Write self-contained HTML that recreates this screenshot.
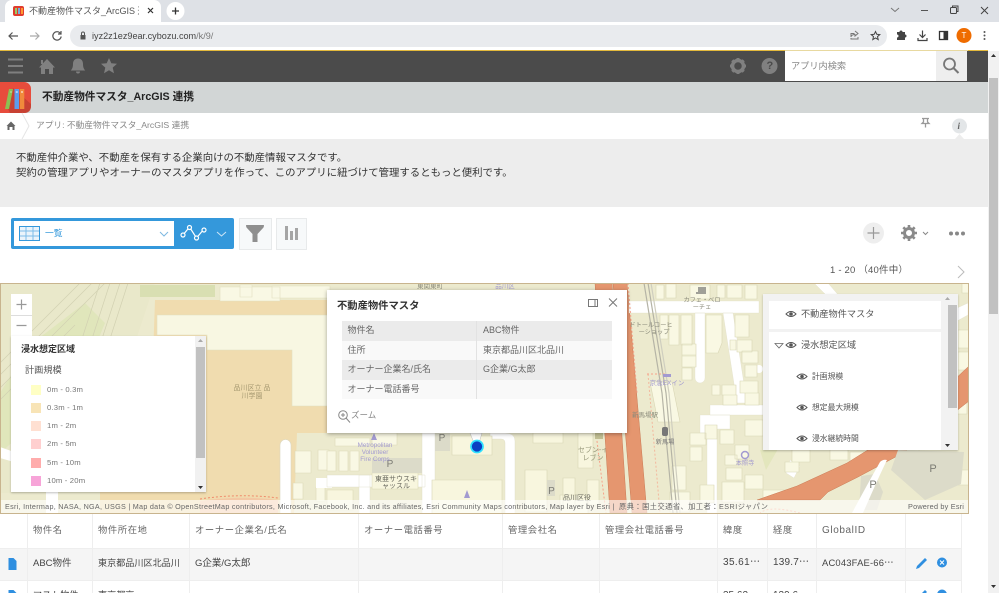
<!DOCTYPE html>
<html lang="ja"><head><meta charset="utf-8"><title>不動産物件マスタ_ArcGIS 連携</title>
<style>
html{margin:0;padding:0;background:#fff;width:999px;height:593px;overflow:hidden}
body{margin:0;padding:0;background:#fff;width:999px;height:593px;overflow:hidden;position:relative;font-family:"Liberation Sans","Noto Sans CJK JP",sans-serif;color:#333}
.a{position:absolute;white-space:nowrap}
.b{position:absolute}
svg{position:absolute;overflow:visible}
.th{position:absolute;top:514px;height:34px;line-height:33px;font-size:9.3px;color:#666;letter-spacing:.6px;white-space:nowrap}
.td{position:absolute;font-size:9.100px;color:#444;white-space:nowrap;top:548px;height:32px;line-height:31px}
.v{position:absolute;top:514px;width:1px;height:79px;background:#eeeeee}
.pt{position:absolute;font-size:9px;color:#666;white-space:nowrap;line-height:19px}
.lg{position:absolute;left:47px;font-size:7.700px;color:#777;white-space:nowrap;letter-spacing:.17px;line-height:12px}
.sw{position:absolute;left:31px;width:10px;height:10px}
</style></head><body>

<!-- chrome tab strip -->
<div class="b" style="left:0;top:0;width:999px;height:22px;background:#dee1e6"></div>
<div class="b" style="left:5px;top:0;width:156px;height:22px;background:#fff;border-radius:7px 7px 0 0"></div>
<div class="b" style="left:13px;top:6px;width:11px;height:10px;background:#e03c2e;border-radius:2px"></div>
<div class="b" style="left:15px;top:8px;width:2px;height:6px;background:#9c6"></div>
<div class="b" style="left:18px;top:8px;width:2px;height:6px;background:#7ad"></div>
<div class="b" style="left:21px;top:8px;width:2px;height:6px;background:#f93"></div>
<div class="a" style="left:29px;top:4px;width:110px;overflow:hidden;font-size:9px;line-height:14px;color:#555">不動産物件マスタ_ArcGIS 連携 - kintone</div>
<svg style="left:0;top:0" width="999" height="50" fill="none" stroke="#444">
<path d="M148 8l5 5M153 8l-5 5" stroke="#333" stroke-width="1.2"/>
<circle cx="175.500" cy="11" r="9" fill="#fff" stroke="none"/><path d="M175.500 7.500v7M172 11h7" stroke-width="1.3" stroke="#333"/>
<path d="M891 8l4 3.500 4-3.500" stroke="#777"/><path d="M921 10.500h7" stroke="#555"/>
<rect x="950.500" y="7.500" width="6" height="6" stroke="#444" rx="1"/><path d="M952.500 7v-1h5.500v5.500h-1" stroke="#444"/>
<path d="M981 7l7 7M988 7l-7 7" stroke="#444"/>
<!-- nav -->
<path d="M9 36h9M12.500 32.500L9 36l3.500 3.500" stroke="#555" stroke-width="1.2"/>
<path d="M30 36h9M35.500 32.500L39 36l-3.500 3.500" stroke="#aaa" stroke-width="1.2"/>
<path d="M60.500 33.500a4.200 4.200 0 1 0 .7 3M61 31v3h-3" stroke="#555" stroke-width="1.2"/>
<rect x="70" y="25" width="817" height="22" rx="11" fill="#e9ebee" stroke="none"/>
<rect x="80.500" y="35" width="5" height="4.500" fill="#555" stroke="none"/><path d="M81.500 35v-1.500a1.500 1.500 0 0 1 3 0V35" stroke="#555"/>
<path d="M851 37v-3.500h3.500M855 31l3 2.500-3 2.500v-1.500q-3 0-4 2M851 38v1h7v-2" stroke="#777"/>
<path d="M875.500 31.500l1.300 2.800 3 .3-2.300 2 .7 3-2.700-1.600-2.700 1.600.7-3-2.300-2 3-.3z" stroke="#444"/>
<path d="M897 33h2.500a1.500 1.500 0 0 1 3 0h2.500v2.500a1.500 1.500 0 0 1 0 3V41h-8v-2.500a1.500 1.500 0 0 0 0-3z" fill="#444" stroke="none" transform="translate(0,-1)"/>
<path d="M922.500 30.500v7M919.500 34.500l3 3 3-3M918 38v2.500h9V38" stroke="#444" stroke-width="1.200"/>
<rect x="939.500" y="31.500" width="8" height="8" stroke="#333" stroke-width="1.300"/><rect x="943.500" y="32" width="4" height="7" fill="#333" stroke="none"/>
<circle cx="964" cy="35.500" r="7.500" fill="#ef6c00" stroke="none"/>
<circle cx="984.500" cy="32" r="1" fill="#555" stroke="none"/><circle cx="984.500" cy="35.500" r="1" fill="#555" stroke="none"/><circle cx="984.500" cy="39" r="1" fill="#555" stroke="none"/>
</svg>
<div class="a" style="left:961.500px;top:30px;font-size:8px;line-height:11px;color:#fff">T</div>
<div class="a" style="left:92px;top:30px;font-size:9.100px;line-height:13px;color:#444">iyz2z1ez9ear.cybozu.com<span style="color:#777">/k/9/</span></div>

<!-- kintone header -->
<div class="b" style="left:0;top:50px;width:988px;height:1px;background:#e3b93c"></div>
<div class="b" style="left:0;top:51px;width:988px;height:31px;background:#4b4b4b"></div>
<div class="b" style="left:785px;top:50px;width:183px;height:1px;background:#e8d9a0"></div>
<div class="b" style="left:785px;top:51px;width:152px;height:30px;background:#fff"></div>
<div class="b" style="left:936px;top:51px;width:31px;height:30px;background:#eeeeee"></div>
<div class="a" style="left:791px;top:59px;font-size:9.200px;line-height:14px;color:#888">アプリ内検索</div>
<svg style="left:0;top:0" width="999" height="140" fill="none">
<path d="M8 59.500h15M8 66h15M8 72.500h15" stroke="#7f7f7f" stroke-width="2"/>
<path d="M39 67.500L47 59l8 8.500h-2v6.500h-4v-5h-4v5h-4v-6.500z" fill="#808080"/><rect x="41" y="60" width="2" height="4" fill="#808080"/>
<path d="M78 58.500c-3.500 0-5 2.500-5 5.500 0 3.500-1 5-2.200 6.500h14.400c-1.200-1.500-2.200-3-2.200-6.500 0-3-1.500-5.500-5-5.500z M76 71.500a2 2 0 0 0 4 0z" fill="#808080"/>
<path d="M109 58l2.300 5.200 5.700.6-4.300 3.800 1.300 5.600-5-3-5 3 1.300-5.600-4.300-3.800 5.700-.6z" fill="#808080"/>
<g transform="translate(738,66)"><circle r="5.500" stroke="#808080" stroke-width="3.500"/><g stroke="#808080" stroke-width="3"><path d="M0-8v2.500M0 8V5.500M-8 0h2.500M8 0H5.500M-5.700-5.700l1.800 1.800M5.700 5.700L3.900 3.900M-5.700 5.700l1.800-1.800M5.700-5.700L3.900-3.900"/></g></g>
<circle cx="769.500" cy="66" r="8" fill="#808080"/>
<circle cx="949.500" cy="64" r="5.500" stroke="#777" stroke-width="1.800"/><path d="M953.500 68l5 5" stroke="#777" stroke-width="2"/>
<path d="M0 139V113h988v26z" fill="#fff"/>
</svg>
<div class="a" style="left:766.500px;top:59px;font-size:11px;font-weight:700;line-height:14px;color:#4b4b4b">?</div>
<div class="b" style="left:0;top:82px;width:988px;height:31px;background:#d2d6d6"></div>
<div class="b" style="left:0;top:82px;width:31px;height:31px;background:#e74c3c;border-radius:0 7px 7px 0"></div>
<svg style="left:0;top:82px" width="31" height="31">
<path d="M13 6L31 22v2q0 7-7 7H10L6 23z" fill="#bd3d30" opacity=".75"/>
<path d="M9 7h4l-4 20H5z" fill="#8cc152"/><rect x="14.500" y="7" width="4.500" height="20" fill="#5d9cec"/><rect x="19.800" y="7" width="4.500" height="20" fill="#f08a3c"/>
<path d="M10.500 10h1M15.800 10h2M21 10h2" stroke="#fff"/>
</svg>
<div class="a" style="left:42px;top:90px;font-size:10.700px;font-weight:700;line-height:15px;color:#222">不動産物件マスタ_ArcGIS 連携</div>

<!-- breadcrumb -->
<svg style="left:0;top:113px" width="988" height="26" fill="none">
<path d="M22 0l7 13-7 13" stroke="#e5e5e5"/>
<path d="M6.500 13L11 8.500l4.500 4.500h-1v4h-2v-3h-3v3h-2v-4z" fill="#666"/>
<path d="M922 5.500h7M923.500 5.500v3.500l-1.500 1.500h7l-1.500-1.500v-3.500M925.500 10.500v4" stroke="#999" stroke-width="1.300"/>
<circle cx="959.500" cy="13" r="7.500" fill="#e3e6e8"/>
<path d="M955 26l4.500-5 4.500 5z" fill="#ededed"/>
</svg>
<div class="a" style="left:36px;top:118px;font-size:8.700px;line-height:14px;color:#888">アプリ: 不動産物件マスタ_ArcGIS 連携</div>
<div class="a" style="left:957.500px;top:120px;font-size:9px;font-style:italic;font-weight:700;font-family:'Liberation Serif',serif;line-height:12px;color:#666">i</div>

<!-- description -->
<div class="b" style="left:0;top:139px;width:988px;height:68px;background:#ededed"></div>
<div class="a" style="left:16px;top:151px;font-size:10.400px;line-height:15px;color:#333">不動産仲介業や、不動産を保有する企業向けの不動産情報マスタです。</div>
<div class="a" style="left:16px;top:166px;font-size:10.400px;line-height:15px;color:#333">契約の管理アプリやオーナーのマスタアプリを作って、このアプリに紐づけて管理するともっと便利です。</div>

<!-- toolbar -->
<div class="b" style="left:11px;top:218px;width:223px;height:31px;background:#3498db;border-radius:2px"></div>
<div class="b" style="left:14px;top:221px;width:160px;height:25px;background:#fff"></div>
<div class="a" style="left:45px;top:226px;font-size:8.800px;line-height:14px;color:#3498db">一覧</div>
<div class="b" style="left:239px;top:218px;width:31px;height:30px;background:#f7f9fa;border:1px solid #e8eaeb"></div>
<div class="b" style="left:276px;top:218px;width:29px;height:30px;background:#f7f9fa;border:1px solid #e8eaeb"></div>
<svg style="left:0;top:210px" width="320" height="45" fill="none">
<rect x="19.500" y="16.500" width="20" height="14" stroke="#3498db" fill="#eaf4fb"/>
<path d="M20 21h19M20 26h19M26 17v13M33 17v13" stroke="#7dbde8"/>
<path d="M160 22l4 4 4-4" stroke="#7db8e0"/>
<path d="M183 25l6.500-8 7 11 7.500-9" stroke="#fff" stroke-width="1.200"/>
<g fill="#3498db" stroke="#fff" stroke-width="1.200"><circle cx="183" cy="25" r="2"/><circle cx="189.500" cy="17.500" r="2"/><circle cx="196.500" cy="28" r="2"/><circle cx="204" cy="20" r="2"/></g>
<path d="M217 22l4.500 4 4.500-4" stroke="#cfe6f6"/>
<path d="M246.500 15h17q1 0 0 2.500l-6 6.500v8l-5 0v-8l-6-6.500q-1-2.500 0-2.500z" fill="#8f8f8f"/>
<rect x="285" y="16" width="3" height="14" fill="#a5a5a5"/><rect x="290" y="21" width="3" height="9" fill="#a5a5a5"/><rect x="295" y="18" width="3" height="12" fill="#a5a5a5"/>
</svg>
<svg style="left:800px;top:215px" width="188" height="65" fill="none">
<circle cx="73.500" cy="18" r="10.500" fill="#eeeeee"/><path d="M73.500 12v12M67.500 18h12" stroke="#999" stroke-width="1.200"/>
<g transform="translate(109,18)"><circle r="4.500" stroke="#8a8a8a" stroke-width="3"/><path d="M0-8V-5M0 8V5M-8 0h3M8 0H5M-5.700-5.700l2 2M5.700 5.700l-2-2M-5.700 5.700l2-2M5.700-5.700l-2 2" stroke="#8a8a8a" stroke-width="2.600"/></g>
<path d="M123 17l2.500 2.500L128 17" stroke="#888"/>
<circle cx="151" cy="18.500" r="2" fill="#888"/><circle cx="157" cy="18.500" r="2" fill="#888"/><circle cx="163" cy="18.500" r="2" fill="#888"/>
<path d="M158 51l6 6-6 6" stroke="#bbb"/>
</svg>
<div class="a" style="left:830px;top:264px;font-size:9.500px;line-height:14px;color:#555;letter-spacing:.2px">1 - 20 （40件中）</div>

<!-- map -->
<div class="b" style="left:0;top:283px;width:969px;height:231px;overflow:hidden;background:#ecead0">
<svg style="left:0;top:0;filter:blur(.35px)" width="969" height="231" viewBox="0 283 969 231">
<rect x="0" y="283" width="969" height="231" fill="#eceace"/>
<!-- terrain left -->
<path d="M0 283h155l-20 60-30 150H0z" fill="#e9e8ca"/>
<path d="M140 285h75v12h-75z" fill="#d9dfb2"/>
<path d="M30 345l55-42 20 20-25 60-80 70v-60z" fill="#e0e6bb"/>
<g stroke="#d2d1b2" stroke-width=".7" fill="none"><path d="M0 363L80 283M0 375L92 283M0 388L105 283M0 400L75 325M100 283L80 345M110 283L90 345M120 283L100 345M128 283L108 345"/></g>
<!-- school -->
<path d="M155 300h190v133H297l-3 80H100l20-20 30-50z" fill="#f0dcaf"/>
<path d="M157 315h173v91h-38v-56h-85v-15h-50z" fill="#f8f7e2" stroke="#e2dfc0" stroke-width=".6"/>
<path d="M220 287h60v14h-60zM240 285h12v12h-12zM272 286h58v12h-58z" fill="#f9f8e4" stroke="#e2dfc0" stroke-width=".6"/>
<text x="252" y="390" font-size="7" fill="#a79a72" text-anchor="middle">品川区立 品</text>
<text x="252" y="398" font-size="7" fill="#a79a72" text-anchor="middle">川学園</text>
<!-- bottom-left misc -->
<path d="M0 447l14 5v10l-14-4zM46 492h12v22H46z" fill="#fff"/>
<path d="M100 492h180v22H100z" fill="#f0dcaf"/>
<path d="M280 445a5.500 5.500 0 0 1 11 0v70h-11z" fill="#fff" stroke="#ddd8c0" stroke-width=".6"/>
<path d="M295 451h16v22h-16zM318 450h11v20h-11zM293 483h10v16h-10zM316 487h9v14h-9z" fill="#f9f8e4" stroke="#dcd9b8" stroke-width=".6"/>
<path d="M316 478h16v10h-16z" fill="#fff"/>
<path d="M200 501q40-6 78-1v14h-78z" fill="#f3bf9e" opacity=".7"/>
<path d="M200 499q40-6 78-1" stroke="#f08a6a" stroke-dasharray="2 2" fill="none"/>
<!-- centre bottom -->
<path d="M327 475h98v12h-98zM359 475h11v40h-11zM422 433h13v82h-13zM490 433h15q10 0 10 8v74h-10v-72q0-4-4-4h-11z" fill="#fff" stroke="#dedcc4" stroke-width=".4"/>
<path d="M335 438h35v8h-35zM372 433h25v12h-25zM327 451h9v20h-9zM339 451h9v20h-9zM350 451h9v20h-9z" fill="#f9f8e4" stroke="#dcd9b8" stroke-width=".6"/>
<path d="M327 490h26v20h-26zM372 473h46v16h-46z" fill="#f8f6de" stroke="#dcd9b8" stroke-width=".6"/>
<path d="M372 458h50v15h-50zM435 433h15v18h-15z" fill="#dcdbc9"/>
<path d="M452 436h40v19h-40zM432 480h70v35h-70z" fill="#f8f6de" stroke="#d8d5b4" stroke-width=".6"/>
<path d="M525 470h22v42h-22zM563 478h12v30h-12zM587 480h12v25h-12zM560 495h28v20h-28zM578 433h15v35h-15zM533 433h30v10h-30z" fill="#f8f6de" stroke="#d8d5b4" stroke-width=".6"/>
<path d="M547 480h8v16h-8z" fill="#dcdbc9"/>
<path d="M596 433l10 80" stroke="#f7a389" stroke-dasharray="2 2" fill="none"/>
<text x="442" y="441" font-size="10" fill="#7c7c74" text-anchor="middle">P</text>
<text x="390" y="467" font-size="10" fill="#7c7c74" text-anchor="middle">P</text>
<text x="551.500" y="494" font-size="10" fill="#7c7c74" text-anchor="middle">P</text>
<g font-size="6.300" fill="#a29ad0" text-anchor="middle"><text x="375" y="447">Metropolitan</text><text x="375" y="454">Volunteer</text><text x="375" y="461">Fire Corps</text></g>
<path d="M374 433l3 7h-6z" fill="#a29ad0"/>
<path d="M467 490l3 8h-6z" fill="#a29ad0"/>
<text x="396" y="481" font-size="7" fill="#66665c" text-anchor="middle">東亜サウスキ</text>
<text x="396" y="488" font-size="7" fill="#66665c" text-anchor="middle">ャッスル</text>
<text x="577" y="500" font-size="7" fill="#66665c" text-anchor="middle">品川区役</text>
<text x="593" y="452" font-size="7" fill="#999a7c" text-anchor="middle">セブン-イ</text>
<text x="593" y="460" font-size="7" fill="#999a7c" text-anchor="middle">レブン</text>
<path d="M595 433h8v6h-8z" fill="#c2bf94"/>
<!-- orange bands -->
<path d="M595 283h17l15 230h-17z" fill="#e5966f" stroke="#c97a55" stroke-width=".5"/>
<path d="M613 283h14l20 230h-15z" fill="#e5966f" stroke="#c97a55" stroke-width=".5"/>
<!-- right area -->
<path d="M629 301h130v12H629zM695 313h10v65a5 5 0 0 1-10 0zM723 313h10l14 90h-10zM710 405h53v10h-53zM700 415h30v14h-13v84h-10v-80h-7zM814 283h14l12 14h-12zM946 313l22-10v12l-22 12zM790 460l10 6-6 12-8-5z" fill="#fff" stroke="#dedcc4" stroke-width=".3"/>
<circle cx="759" cy="369" r="4" fill="#fff"/>
<g fill="#f9f8e3" stroke="#d8d5b4" stroke-width=".6">
<path d="M656 285h8v14h-8zM666 284h10v14h-10zM690 285h20v14h-20zM717 285h8v13h-8zM727 285h15v13h-15zM745 285h12v14h-12z"/>
<path d="M660 315h8v24h-8zM669 315h10v30l-10 0zM681 315h11v30h-11zM682 344h14v12h-14zM682 355h14v12h-14zM682 368h10v12h-10z"/>
<path d="M706 315h16v28l-4 10h-12zM730 340h6v10h-6zM735 315h14v22h-14zM737 340h15v12h-15zM742 351h16v12h-16zM745 365h12v12h-12zM740 381h18v12h-18zM745 393h14v12h-14z"/>
<path d="M650 382h22l8 40h-22zM722 385h14v10h-14zM723 395h14v10h-14zM712 385h8v10h-8zM720 430h14v14h-14zM745 420h18v16h-18zM735 445h14v14h-14zM725 455h12v10h-12z"/>
<path d="M690 433h16v12h-16zM690 447h12v14h-12zM705 425h12v14h-12zM726 468h16v12h-16zM700 485h14v18h-14zM722 482h22v20h-22zM745 475h18v14h-18zM672 466h14v24h-14zM670 492h20v20h-20zM763 490h24v10h-24z"/>
<path d="M962 283h7v10h-7zM958 330h11v18h-11zM958 352h11v18h-11zM955 400h12v14h-12zM785 462h14v10h-14zM792 450h18v12h-18zM830 450h18v10h-18zM850 452h14v12h-14zM905 450h14v10h-14zM955 470h14v15h-14z"/>
</g>
<!-- rail -->
<g stroke="#b5b4a6" stroke-width="1.200" fill="none"><path d="M644 283l18 110 11 120M648 283l18 110 11 120"/><path d="M651 283l18 110 11 120" stroke="#cfcebf"/></g>
<path d="M628 283l9 110" stroke="#f7a389" stroke-dasharray="2 2" stroke-width="1" fill="none"/>
<path d="M647 374h20" stroke="#f7a389" stroke-dasharray="2 2" fill="none"/>
<path d="M648 374l12 139" stroke="#f7a389" stroke-dasharray="2 2" stroke-width="1" opacity=".7" fill="none"/>
<!-- green -->
<path d="M760 450h12l14-15h0l-20 35z" fill="#e3e6bd"/>
<!-- river -->
<path d="M757 500l40-14 50-23 56-35 66-62v35l-66 52-45 24-30 15-8 8h-63z" fill="#e5966f" stroke="#c97a55" stroke-width=".5"/>
<!-- lots -->
<path d="M898 450l66 2-3 32-36 16-34-30zM861 476l14-2 8 18-6 18h-18z" fill="#dcdbc9"/>
<path d="M880 462q3-3 7-2-7 14-24 53h-11q15-28 28-51z" fill="#fff"/>
<text x="933" y="472" font-size="11" fill="#7c7c74" text-anchor="middle">P</text>
<text x="873" y="488" font-size="11" fill="#7c7c74" text-anchor="middle">P</text>
<path d="M800 513q-30-8-40 0" stroke="#f7a389" stroke-dasharray="2 2" fill="none"/>
<!-- labels -->
<g font-size="6.200" fill="#8a8a7a" text-anchor="middle"><text x="702" y="302">カフェ・ベロ</text><text x="702" y="309">ーチェ</text><text x="651" y="327">ドトールコーヒ</text><text x="654" y="334">ーショップ</text></g>
<path d="M698 287h8v5h-8zM696 292h10v2h-10z" fill="#a0a098"/>
<text x="667" y="385" font-size="6.500" fill="#a29ad0" text-anchor="middle">京急EXイン</text>
<path d="M663 374h8v3h-8z" fill="#a29ad0"/>
<text x="645" y="417" font-size="6.500" fill="#8a8a7a" text-anchor="middle">新馬場駅</text>
<rect x="662" y="427" width="6" height="9" rx="2" fill="#777"/>
<text x="665" y="444" font-size="6.200" fill="#777" text-anchor="middle">新馬場</text>
<circle cx="745" cy="455" r="3.500" fill="none" stroke="#a29ad0" stroke-width="1.500"/>
<text x="745" y="465" font-size="6.200" fill="#a29ad0" text-anchor="middle">本照寺</text>
<text x="430" y="288" font-size="6.500" fill="#8a8a7a" text-anchor="middle">東関東町</text>
<text x="505" y="288" font-size="6.500" fill="#a29ad0" text-anchor="middle">品川区</text>
<!-- marker -->
<path d="M470 433l4 10h5l3-10z" fill="#fff" stroke="#bbb" stroke-width=".5"/>
<circle cx="477" cy="446.500" r="6" fill="#0b3fc2" stroke="#2ee0ff" stroke-width="1.700"/>
</svg>

<!-- zoom control -->
<div class="b" style="left:11px;top:11px;width:21px;height:42px;background:#fff"></div>
<div class="b" style="left:11px;top:32px;width:21px;height:1px;background:#ddd"></div>
<svg style="left:11px;top:11px" width="21" height="42"><path d="M5.500 10.500h10M10.500 5.500v10M5.500 31.500h10" stroke="#999" stroke-width="1.200"/></svg>

<!-- legend -->
<div class="b" style="left:11px;top:53px;width:195px;height:156px;background:#fff;box-shadow:0 1px 2px rgba(0,0,0,.25)"></div>
<div class="b" style="left:195px;top:53px;width:11px;height:156px;background:#f1f1f1"></div>
<div class="b" style="left:196px;top:64px;width:9px;height:111px;background:#c1c1c1"></div>
<svg style="left:195px;top:53px" width="11" height="156"><path d="M3 6l2.500-3L8 6z" fill="#aaa"/><path d="M3 150l2.500 3 2.500-3z" fill="#333"/></svg>
<div class="a" style="left:21px;top:60px;font-size:9px;font-weight:700;line-height:13px;color:#333">浸水想定区域</div>
<div class="a" style="left:25px;top:81px;font-size:9.200px;line-height:13px;color:#555">計画規模</div>
<div class="sw" style="top:102px;background:#ffffc4"></div><div class="lg" style="top:101px">0m - 0.3m</div>
<div class="sw" style="top:120px;background:#f8e4b6"></div><div class="lg" style="top:119px">0.3m - 1m</div>
<div class="sw" style="top:138px;background:#ffe0d2"></div><div class="lg" style="top:137px">1m - 2m</div>
<div class="sw" style="top:156px;background:#ffcfcf"></div><div class="lg" style="top:155px">2m - 5m</div>
<div class="sw" style="top:175px;background:#ffacac"></div><div class="lg" style="top:174px">5m - 10m</div>
<div class="sw" style="top:193px;background:#f7a4d8"></div><div class="lg" style="top:192px">10m - 20m</div>

<!-- popup -->
<div class="b" style="left:327px;top:7px;width:300px;height:143px;background:#fff;box-shadow:0 1px 4px rgba(0,0,0,.35)"></div>
<div class="a" style="left:337px;top:14px;font-size:10.300px;font-weight:700;line-height:16px;color:#333;transform:translateY(2px)">不動産物件マスタ</div>
<svg style="left:327px;top:7px" width="300" height="40" fill="none"><rect x="261.500" y="9.500" width="9" height="7" stroke="#777"/><path d="M268 10v6" stroke="#777"/><path d="M282 8.500l8 8M290 8.500l-8 8" stroke="#777"/></svg>
<div class="b" style="left:342px;top:38px;width:270px;height:20px;background:#ebebeb"></div>
<div class="b" style="left:342px;top:58px;width:270px;height:19px;background:#f9f9f9"></div>
<div class="b" style="left:342px;top:77px;width:270px;height:20px;background:#ebebeb"></div>
<div class="b" style="left:342px;top:97px;width:270px;height:19px;background:#f9f9f9"></div>
<div class="b" style="left:476px;top:38px;width:1px;height:78px;background:#e2e2e2"></div>
<div class="pt" style="left:347.500px;top:38px">物件名</div><div class="pt" style="left:483px;top:38px">ABC物件</div>
<div class="pt" style="left:347.500px;top:58px">住所</div><div class="pt" style="left:483px;top:58px">東京都品川区北品川</div>
<div class="pt" style="left:347.500px;top:77px">オーナー企業名/氏名</div><div class="pt" style="left:483px;top:77px">G企業/G太郎</div>
<div class="pt" style="left:347.500px;top:97px">オーナー電話番号</div>
<svg style="left:337px;top:126px" width="14" height="14" fill="none"><circle cx="6" cy="6" r="4.300" stroke="#888"/><path d="M9 9l4 4.500M4 6h4M6 4v4" stroke="#888"/></svg>
<div class="a" style="left:351px;top:125px;font-size:8.500px;line-height:14px;color:#888">ズーム</div>

<!-- layer list -->
<div class="b" style="left:763px;top:11px;width:195px;height:156px;background:#f2f2f2;box-shadow:0 1px 2px rgba(0,0,0,.25)"></div>
<div class="b" style="left:769px;top:18px;width:172px;height:28px;background:#fff"></div>
<div class="b" style="left:769px;top:49px;width:172px;height:118px;background:#fff"></div>
<div class="b" style="left:948px;top:22px;width:9px;height:103px;background:#c1c1c1"></div>
<svg style="left:763px;top:11px" width="195" height="156" fill="none" stroke="#555">
<path d="M182 6l2.500-3 2.500 3z" fill="#aaa" stroke="none"/><path d="M182 150l2.500 3 2.500-3z" fill="#333" stroke="none"/>
<path d="M12 49.500h8l-4 4.500z" stroke="#666" stroke-width=".8"/>
<path d="M23 20q5-5 10 0q-5 5-10 0z"/><circle cx="28" cy="20" r="1.800" fill="#555" stroke="none"/>
<path d="M23 51q5-5 10 0q-5 5-10 0z"/><circle cx="28" cy="51" r="1.800" fill="#555" stroke="none"/>
<path d="M34 82.500q5-5 10 0q-5 5-10 0z"/><circle cx="39" cy="82.500" r="1.800" fill="#555" stroke="none"/>
<path d="M34 113.500q5-5 10 0q-5 5-10 0z"/><circle cx="39" cy="113.500" r="1.800" fill="#555" stroke="none"/>
<path d="M34 144.500q5-5 10 0q-5 5-10 0z"/><circle cx="39" cy="144.500" r="1.800" fill="#555" stroke="none"/>
</svg>
<div class="a" style="left:801px;top:24px;font-size:9.200px;line-height:15px;color:#555">不動産物件マスタ</div>
<div class="a" style="left:801px;top:55px;font-size:9.200px;line-height:15px;color:#555">浸水想定区域</div>
<div class="a" style="left:812px;top:87px;font-size:7.800px;line-height:13px;color:#555">計画規模</div>
<div class="a" style="left:812px;top:118px;font-size:7.800px;line-height:13px;color:#555">想定最大規模</div>
<div class="a" style="left:812px;top:149px;font-size:7.800px;line-height:13px;color:#555">浸水継続時間</div>

<!-- attribution -->
<div class="b" style="left:0;top:217px;width:969px;height:14px;background:rgba(255,255,255,.62)"></div>
<div class="a" style="left:5px;top:218px;font-size:7.200px;line-height:12px;color:#666;letter-spacing:.285px">Esri, Intermap, NASA, NGA, USGS | Map data © OpenStreetMap contributors, Microsoft, Facebook, Inc. and its affiliates, Esri Community Maps contributors, Map layer by Esri |</div>
<div class="a" style="left:619px;top:218px;font-size:7.200px;line-height:12px;color:#666;letter-spacing:.5px">原典：国土交通省、加工者：ESRIジャパン</div>
<div class="a" style="left:908px;top:218px;font-size:7.300px;line-height:12px;color:#666;letter-spacing:.2px">Powered by Esri</div>
<div class="b" style="left:0;top:0;width:969px;height:1px;background:#c8b48e"></div>
<div class="b" style="left:0;top:230px;width:969px;height:1px;background:#c8b48e"></div>
<div class="b" style="left:0;top:0;width:1px;height:231px;background:#c8b48e"></div>
<div class="b" style="left:968px;top:0;width:1px;height:231px;background:#c8b48e"></div>
</div>

<!-- table -->
<div class="b" style="left:0;top:548px;width:962px;height:32px;background:#f5f5f5;border-top:1px solid #eeeeee;box-sizing:border-box"></div>
<div class="b" style="left:0;top:580px;width:962px;height:1px;background:#eeeeee"></div>
<div class="v" style="left:27px"></div><div class="v" style="left:92px"></div><div class="v" style="left:189px"></div><div class="v" style="left:358px"></div>
<div class="v" style="left:502px"></div><div class="v" style="left:599px"></div><div class="v" style="left:717px"></div><div class="v" style="left:767px"></div><div class="v" style="left:816px"></div><div class="v" style="left:905px"></div><div class="v" style="left:961px"></div>
<div class="th" style="left:33px">物件名</div><div class="th" style="left:98px">物件所在地</div><div class="th" style="left:195px">オーナー企業名/氏名</div><div class="th" style="left:364px">オーナー電話番号</div>
<div class="th" style="left:508px">管理会社名</div><div class="th" style="left:605px">管理会社電話番号</div><div class="th" style="left:723px">緯度</div><div class="th" style="left:773px">経度</div><div class="th" style="left:822px;font-size:10px">GlobalID</div>
<div class="td" style="left:33px;font-size:9.500px">ABC物件</div><div class="td" style="left:98px">東京都品川区北品川</div><div class="td" style="left:195px;font-size:9.500px">G企業/G太郎</div>
<div class="td" style="left:723px;font-size:10px;letter-spacing:.4px;line-height:30px">35.61⋯</div><div class="td" style="left:773px;font-size:10px;letter-spacing:.2px;line-height:30px">139.7⋯</div><div class="td" style="left:822px;font-size:9.400px;letter-spacing:.2px;line-height:30px">AC043FAE-66⋯</div>
<div class="td" style="left:33px;top:580px">マスト物件</div><div class="td" style="left:98px;top:580px">東京都京</div>
<div class="td" style="left:723px;top:580px;font-size:10px">35.62⋯</div><div class="td" style="left:773px;top:580px;font-size:10px">139.6⋯</div>
<svg style="left:0;top:548px" width="988" height="45" fill="none">
<path d="M8.500 10h5l3 3v9h-8z" fill="#2f8fe0"/><path d="M8.500 42h5l3 3v10h-8z" fill="#2f8fe0"/>
<path d="M917 18l8-8 2 2-8 8-3 1z" fill="#2f8fe0"/><path d="M917 50l8-8 2 2-8 8-3 1z" fill="#2f8fe0"/>
<circle cx="942" cy="14.500" r="5" fill="#2f8fe0"/><path d="M940 12.500l4 4M944 12.500l-4 4" stroke="#fff"/>
<circle cx="942" cy="46.500" r="5" fill="#2f8fe0"/>
</svg>

<!-- scrollbar -->
<div class="b" style="left:988px;top:51px;width:11px;height:542px;background:#f1f1f1"></div>
<div class="b" style="left:989px;top:78px;width:9px;height:236px;background:#c1c1c1"></div>
<svg style="left:988px;top:51px" width="11" height="542"><path d="M3 6l2.500-3L8 6z" fill="#333"/><path d="M3 534l2.500 3 2.500-3z" fill="#333"/></svg>
</body></html>
